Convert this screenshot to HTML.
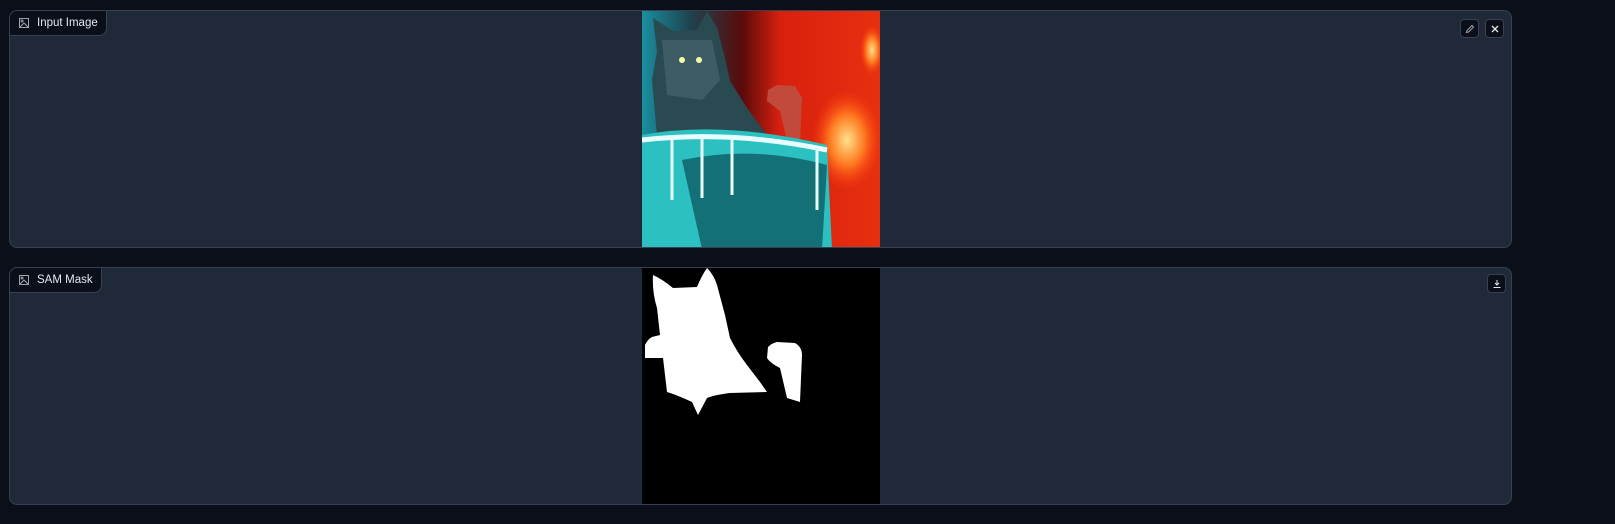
<!DOCTYPE html>
<html><head><style>
html,body{margin:0;padding:0;background:#0b0f19;width:1615px;height:524px;overflow:hidden;font-family:"Liberation Sans",sans-serif}
.panel{position:absolute;left:9px;width:1503px;height:238px;background:#1f2937;border:1px solid #374151;border-radius:8px;box-sizing:border-box;overflow:hidden}
.label{position:absolute;left:-1px;top:-1px;height:26px;padding:0 8px 0 9px;background:#0b0f19;border:1px solid #374151;border-radius:8px 0 8px 0;color:#e5e7eb;font-size:11.5px;display:flex;align-items:center;gap:8px;box-sizing:border-box}
.btn{position:absolute;width:19px;height:19px;border:1px solid #374151;border-radius:4px;background:#0b0f19;box-sizing:border-box;display:flex;align-items:center;justify-content:center}
.img{position:absolute;left:632px;top:-1px;width:238px;height:239px}
</style></head><body>
<div class="panel" style="top:10px">
 <div class="label"><svg width="10" height="10" viewBox="0 0 10 10" fill="none" stroke="#9ca3af" stroke-width="1"><rect x="0.5" y="0.5" width="9" height="9"/><path d="M1 9L5 5l4 4"/><circle cx="3" cy="3" r="1"/></svg>Input Image</div>
 <div class="img" style="background:linear-gradient(90deg,#1a8fa0 0%,#1d4450 20%,#5a0a0a 42%,#d8200e 58%,#e63010 100%)">
  <svg width="238" height="239" viewBox="0 0 238 239">
   <defs><radialGradient id="g" cx="0.5" cy="0.5" r="0.5"><stop offset="0" stop-color="#ffe08a"/><stop offset="0.5" stop-color="#ff7a20"/><stop offset="1" stop-color="#ff3a0a" stop-opacity="0"/></radialGradient></defs>
   <ellipse cx="205" cy="130" rx="35" ry="50" fill="url(#g)"/>
   <ellipse cx="230" cy="40" rx="12" ry="25" fill="url(#g)"/>
   <path d="M11 8L31 21 55 20 65 1 75 18 83 48 88 71 105 98 125 125 88 126 15 126 10 70 15 41Z" fill="#2a4a52"/>
   <path d="M20 30L70 30 78 70 60 90 25 85Z" fill="#3d5c63"/>
   <path d="M126 80L135 75 153 76 160 88 158 135 145 131 138 101 125 91Z" fill="#c24a3a"/>
   <path d="M0 125Q80 110 185 135L190 239H0Z" fill="#2cc0c0"/>
   <path d="M40 150Q110 135 185 155L180 239H60Z" fill="#137076"/>
   <path d="M0 130Q90 120 185 140" stroke="#e8ffff" stroke-width="5" fill="none"/>
   <path d="M30 130v60M60 128v60M90 130v55M175 140v60" stroke="#e8ffff" stroke-width="3"/>
   <circle cx="40" cy="50" r="3" fill="#efffaa"/><circle cx="57" cy="50" r="3" fill="#efffaa"/>
  </svg>
 </div>
 <div class="btn" style="left:1450px;top:8px"><svg width="10" height="10" viewBox="0 0 10 10" fill="none" stroke="#9ca3af" stroke-width="1"><path d="M1.5 8.5l0.5-2 5-5 1.5 1.5-5 5z"/></svg></div>
 <div class="btn" style="left:1475px;top:8px"><svg width="10" height="10" viewBox="0 0 10 10" stroke="#e5e7eb" stroke-width="1.3"><path d="M2 2l6 6M8 2l-6 6"/></svg></div>
</div>
<div class="panel" style="top:267px">
 <div class="label"><svg width="10" height="10" viewBox="0 0 10 10" fill="none" stroke="#9ca3af" stroke-width="1"><rect x="0.5" y="0.5" width="9" height="9"/><path d="M1 9L5 5l4 4"/><circle cx="3" cy="3" r="1"/></svg>SAM Mask</div>
 <div class="img" style="background:#000">
  <svg width="238" height="239" viewBox="0 0 238 239" fill="#fff">
   <path d="M11 8Q20 12 31 21L55 20Q60 8 65 1Q72 8 75 18L83 48 88 71Q95 85 105 98L118 115 125 125 88 126Q72 128 65 131L56 148 50 135Q35 128 25 125L21 91 3 91 3 78Q6 72 10 70L18 68 15 41Q10 25 11 8Z"/>
   <path d="M126 80Q130 76 135 75L153 76Q160 80 160 88L158 135 145 131 138 101Q128 96 125 91Z"/>
  </svg>
 </div>
 <div class="btn" style="left:1477px;top:6px"><svg width="10" height="10" viewBox="0 0 10 10" fill="none" stroke="#e5e7eb" stroke-width="1"><path d="M5 1v5M3 4l2 2 2-2M1.5 8.5h7"/></svg></div>
</div>
</body></html>
